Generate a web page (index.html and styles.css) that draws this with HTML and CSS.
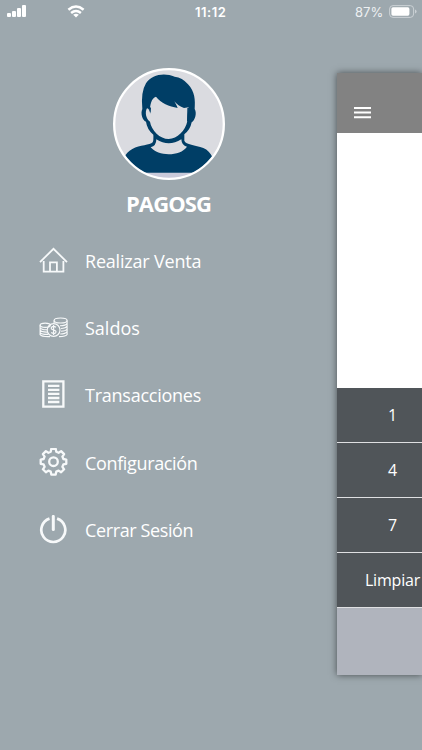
FILE: index.html
```html
<!DOCTYPE html>
<html lang="es">
<head>
    <meta charset="UTF-8">
    <meta name="viewport" content="width=device-width, initial-scale=1.0">
    <title>PAGOSG</title>
    <link rel="stylesheet" href="styles.css">
</head>
<body>
    <header class="status-bar">
        <svg class="signal" width="20" height="12" viewBox="0 0 20 12" fill="#fff">
            <rect x="0" y="8" width="4" height="4" rx="1"/>
            <rect x="5" y="6" width="4" height="6" rx="1"/>
            <rect x="10" y="3" width="4" height="9" rx="1"/>
            <rect x="15" y="0" width="4" height="12" rx="1"/>
        </svg>
        <svg class="wifi" width="18" height="13" viewBox="0 0 18 13" fill="none" stroke="#fff" stroke-width="2.5">
            <path d="M1.4 4.7Q9-1.6 16.6 4.7"/>
            <path d="M4.1 8Q9 4 13.9 8"/>
            <path d="M9 12.6L6.2 9.8Q9 7.8 11.8 9.8Z" fill="#fff" stroke="none"/>
        </svg>
        <span class="time">11:12</span>
        <span class="battery-text">87%</span>
        <svg class="battery" width="28" height="13" viewBox="0 0 28 13">
            <rect x=".6" y=".6" width="24" height="11.8" rx="3.4" fill="none" stroke="#cbd1d5" stroke-width="1"/>
            <rect x="2.4" y="2.3" width="18" height="8.4" rx="1.6" fill="#fff"/>
            <path d="M26 4.4Q27.6 5 27.6 6.5T26 8.6Z" fill="#cbd1d5"/>
        </svg>
    </header>

    <main class="content">
        <aside class="drawer">
            <div class="profile">
                <svg class="avatar" viewBox="24 23 336 336">
                    <defs>
                        <clipPath id="circle"><circle cx="192" cy="191" r="163"/></clipPath>
                    </defs>
                    <circle cx="192" cy="191" r="164" fill="#dadbe0"/>
                    <g clip-path="url(#circle)">
                        <path fill="#003e66" d="M48 337C52 301 58 278 82 266C105 254 135 255 143 246Q146 240 145 223Q126 207 123 184C112 180 106 159 112 146Q107 95 123 69C140 42 178 36 209 49Q232 51 249 72C270 94 271 120 269 146C277 159 269 181 260 186Q256 208 238 222V241C243 254 270 253 295 263C320 274 330 301 336 337Z"/>
                        <path fill="#dadbe0" d="M134 157C135 132 139 114 153 109C168 129 192 137 218 143Q214 133 208 123Q219 137 237 143L251 141Q248 160 247 183C241 211 217 236 191 236C165 236 139 210 135 184C123 178 119 154 126 144C132 145 132 149 134 157Z"/>
                        <path fill="#003e66" d="M132 144L138 141L137 160ZM247 143L252 142L250 182L246 184Z"/>
                        <path fill="#dadbe0" d="M154 237Q191 261 229 237Q230 256 246 259C225 289 160 289 137 261Q154 257 154 237Z"/>
                        <path fill="#c9cada" d="M80 338H310V360H80Z"/>
                    </g>
                    <circle cx="192" cy="191" r="164.5" fill="none" stroke="#fff" stroke-width="7"/>
                </svg>
                <h1 class="name">PAGOSG</h1>
            </div>

            <nav>
                <ul class="menu">
                    <li>
                        <a href="#">
                            <svg class="icon" viewBox="0 0 30 30" stroke-width="1.8">
                                <path d="M1 16.2L14.5 2.8L28 16.2"/>
                                <path d="M4.7 15V25.6H24.4V15M11 25V16.3H17.9V25"/>
                            </svg>
                            <span class="label venta">Realizar Venta</span>
                        </a>
                    </li>
                    <li>
                        <a href="#">
                            <svg class="icon coins" viewBox="0 0 30 30" stroke-width="1.15">
                                <ellipse cx="21.6" cy="7.5" rx="6.5" ry="2.5"/>
                                <path d="M15.1 7.5V10M28.1 7.5V21.5Q27 23.5 20 23.6M28.1 10.2Q27 12.7 21 12.7M28.1 13.1Q27 15.4 21.8 15.5M28.1 15.9Q27 18 22 18.2M28.1 18.7Q26.5 21 21.2 21"/>
                                <ellipse cx="6.2" cy="12.2" rx="5.1" ry="2.1"/>
                                <path d="M1.1 12.2V21.7Q3 24 11 23.6M1.1 14.7Q2.5 16.9 8 16.7M1.1 17.2Q2.5 19.2 8 19.1M1.1 19.6Q3 21.6 9 21.4"/>
                                <circle cx="14.6" cy="17" r="6.4"/>
                                <path d="M17 14.3Q14.6 12.5 12.8 14C11.3 15.7 12.8 16.6 14.6 17C16.6 17.5 17.8 18.5 16.5 19.9Q14.6 21.1 12.2 19.5M14.6 12V22"/>
                            </svg>
                            <span class="label saldos">Saldos</span>
                        </a>
                    </li>
                    <li>
                        <a href="#">
                            <svg class="icon" viewBox="0 0 30 30" stroke-width="2.3">
                                <path d="M4.3 1.3H24.4V26.7H4.3Z"/>
                                <path d="M9 5.8H20.4M9 9.8H20.4M9 13.9H20.4M9 18H20.4M9 22H20.4"/>
                            </svg>
                            <span class="label transacciones">Transacciones</span>
                        </a>
                    </li>
                    <li>
                        <a href="#">
                            <svg class="icon" viewBox="0 .9 30 30" stroke-width="2.3" stroke-linejoin="round">
                                <path d="M12.3 1.7H16.7L17.3 4.7L19.6 5.7L22.1 4L25.1 7L23.4 9.5L24.4 11.9L27.3 12.5V16.7L24.4 17.3L23.4 19.7L25.1 22.2L22.1 25.2L19.6 23.5L17.3 24.5L16.7 27.5H12.3L11.7 24.5L9.4 23.5L6.9 25.2L3.9 22.2L5.6 19.7L4.6 17.3L1.7 16.7V12.5L4.6 11.9L5.6 9.5L3.9 7L6.9 4L9.4 5.7L11.7 4.7Z"/>
                                <circle cx="14.5" cy="14.6" r="4.3"/>
                            </svg>
                            <span class="label configuracion">Configuración</span>
                        </a>
                    </li>
                    <li>
                        <a href="#">
                            <svg class="icon" viewBox="0 .6 30 30" stroke-width="2.7">
                                <path d="M10.5 4.2A12 12 0 1 0 18.1 4.2"/>
                                <path d="M14.3 2V15.2" stroke-width="3" stroke-linecap="round"/>
                            </svg>
                            <span class="label sesion">Cerrar Sesión</span>
                        </a>
                    </li>
                </ul>
            </nav>
        </aside>

        <section class="panel">
            <div class="panel-header">
                <svg width="17" height="12" viewBox="0 0 17 12" fill="#fff">
                    <path d="M0 0H17V2H0ZM0 4.6H17V6.6H0ZM0 9.2H17V11.2H0Z"/>
                </svg>
            </div>
            <div class="display"></div>
            <div class="keys">
                <div class="key">1</div>
                <div class="key">4</div>
                <div class="key">7</div>
                <div class="key">Limpiar</div>
            </div>
            <div class="panel-footer"></div>
        </section>
    </main>
</body>
</html>
```
FILE: styles.css
```css
* {
    box-sizing: border-box;
}
body {
    margin: 0;
    height: 750px;
    overflow: hidden;
    background-color: #9da8ae;
    color: white;
    font-family: "Open Sans", "Noto Sans", sans-serif;
}
.status-bar {
    display: flex;
    align-items: center;
    height: 23px;
    padding-left: 7px;
    font-family: Inter, sans-serif;
    font-size: 13px;
}
.signal {
    margin-top: -1px;
}
.wifi {
    margin-left: 40px;
}
.time {
    width: 34px;
    margin-left: 110px;
    font-weight: 600;
    letter-spacing: 0.5px;
    white-space: nowrap;
}
.battery-text {
    width: 29px;
    margin-left: 126px;
    color: #edf0f2;
}
.battery {
    margin-left: 5px;
}
.content {
    display: flex;
    align-items: flex-start;
}
.drawer {
    width: 337px;
    flex-shrink: 0;
    padding-top: 45px;
}
.profile {
    display: flex;
    flex-direction: column;
    align-items: center;
}
.avatar {
    width: 112px;
    height: 112px;
}
.name {
    margin: 8px 0 0;
    font-size: 22px;
    line-height: 30px;
    font-weight: 700;
    letter-spacing: -0.9px;
}
.menu {
    list-style-type: none;
    margin: 0;
    padding: 9px 0 0 39px;
}
.menu li {
    height: 67.4px;
}
.menu a {
    display: flex;
    align-items: center;
    gap: 16px;
    height: 67.4px;
    color: white;
    text-decoration: none;
    font-size: 18px;
}
.icon {
    width: 30px;
    height: 30px;
    fill: none;
    stroke: #f7f9fa;
}
.label {
    white-space: nowrap;
}
.venta {
    letter-spacing: -0.2px;
}
.transacciones {
    letter-spacing: -0.25px;
}
.configuracion {
    letter-spacing: -0.35px;
}
.sesion {
    letter-spacing: -0.38px;
}
.panel {
    flex: 1;
    height: 602px;
    margin-top: 50px;
    overflow: hidden;
    white-space: nowrap;
    box-shadow: 0 0 7px rgba(0, 0, 0, 0.55);
}
.panel-header {
    height: 60px;
    padding: 34px 0 0 17px;
    background-color: #828282;
}
.panel-header svg {
    display: block;
}
.display {
    height: 255px;
    background-color: white;
}
.key {
    display: flex;
    justify-content: center;
    align-items: center;
    width: 111px;
    height: 55px;
    border-bottom: 1px solid #dfe0e2;
    background-color: #505559;
    font-size: 16px;
    letter-spacing: -0.2px;
}
.panel-footer {
    height: 67px;
    background-color: #b0b4bd;
}
```
